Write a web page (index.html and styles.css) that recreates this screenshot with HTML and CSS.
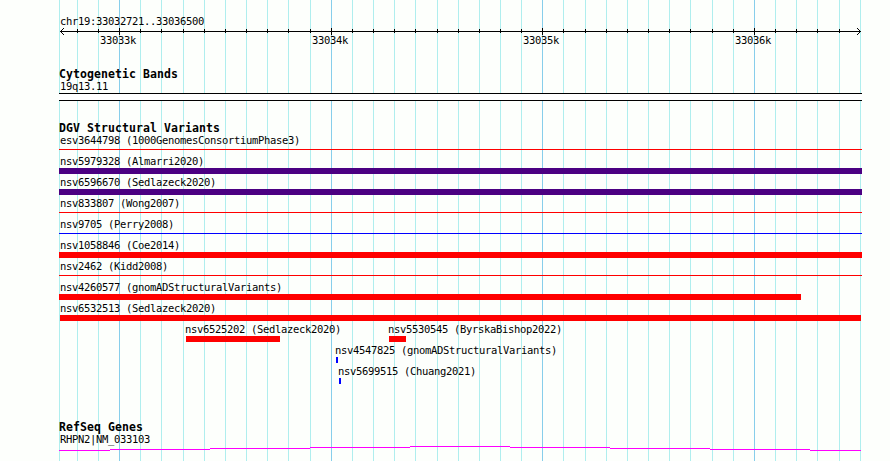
FILE: index.html
```html
<!DOCTYPE html>
<html lang="en">
<head>
  <meta charset="UTF-8" />
  <title>chr19:33032721..33036500</title>
  <link rel="stylesheet" href="styles.css">
</head>
<body>

<main class="panel">
  <!-- grid lines, one every 100 bp -->
  <svg class="grid" width="803" height="461" shape-rendering="crispEdges">
    <path class="minor" d="M.5 0v461M18.5 0v461M39.5 0v461M81.5 0v461M102.5 0v461M124.5 0v461M145.5 0v461M166.5 0v461M187.5 0v461M208.5 0v461M229.5 0v461M251.5 0v461M293.5 0v461M314.5 0v461M335.5 0v461M356.5 0v461M378.5 0v461M399.5 0v461M420.5 0v461M441.5 0v461M462.5 0v461M504.5 0v461M526.5 0v461M547.5 0v461M568.5 0v461M589.5 0v461M610.5 0v461M631.5 0v461M653.5 0v461M674.5 0v461M716.5 0v461M737.5 0v461M758.5 0v461M780.5 0v461M801.5 0v461" />
    <path class="major" d="M60.5 0v461M272.5 0v461M483.5 0v461M695.5 0v461" />
  </svg>

  <section class="ruler">
    <div class="label">chr19:33032721..33036500</div>
    <svg class="scale" width="803" height="7" shape-rendering="crispEdges">
      <path d="M1 3.5h801" />
      <path d="M18.5 1v4M39.5 1v4M81.5 1v4M102.5 1v4M124.5 1v4M145.5 1v4M166.5 1v4M187.5 1v4M208.5 1v4M229.5 1v4M251.5 1v4M293.5 1v4M314.5 1v4M335.5 1v4M356.5 1v4M378.5 1v4M399.5 1v4M420.5 1v4M441.5 1v4M462.5 1v4M504.5 1v4M526.5 1v4M547.5 1v4M568.5 1v4M589.5 1v4M610.5 1v4M631.5 1v4M653.5 1v4M674.5 1v4M716.5 1v4M737.5 1v4M758.5 1v4M780.5 1v4" />
      <path d="M60.5 0v7M272.5 0v7M483.5 0v7M695.5 0v7" />
      <path d="M4.5 0v1M3.5 1v1M2.5 2v1M2.5 4v1M3.5 5v1M4.5 6v1" />
      <path d="M798.5 0v1M799.5 1v1M800.5 2v1M800.5 4v1M799.5 5v1M798.5 6v1" />
    </svg>
    <div class="numbers">
      <span>33033k</span>
      <span>33034k</span>
      <span>33035k</span>
      <span>33036k</span>
    </div>
  </section>

  <section class="track bands">
    <h2>Cytogenetic Bands</h2>
    <div class="label">19q13.11</div>
    <div class="band"></div>
  </section>

  <section class="track variants">
    <h2>DGV Structural Variants</h2>
    <div class="row"><div class="feature full">
      <div class="label">esv3644798 (1000GenomesConsortiumPhase3)</div>
      <div class="line loss"></div>
    </div></div>
    <div class="row"><div class="feature full">
      <div class="label">nsv5979328 (Almarri2020)</div>
      <div class="bar complex"></div>
    </div></div>
    <div class="row"><div class="feature full">
      <div class="label">nsv6596670 (Sedlazeck2020)</div>
      <div class="bar complex"></div>
    </div></div>
    <div class="row"><div class="feature full">
      <div class="label">nsv833807 (Wong2007)</div>
      <div class="line loss"></div>
    </div></div>
    <div class="row"><div class="feature full">
      <div class="label">nsv9705 (Perry2008)</div>
      <div class="line gain"></div>
    </div></div>
    <div class="row"><div class="feature full">
      <div class="label">nsv1058846 (Coe2014)</div>
      <div class="bar loss"></div>
    </div></div>
    <div class="row"><div class="feature full">
      <div class="label">nsv2462 (Kidd2008)</div>
      <div class="line loss"></div>
    </div></div>
    <div class="row"><div class="feature full">
      <div class="label">nsv4260577 (gnomADStructuralVariants)</div>
      <div class="bar loss" style="width: 742px"></div>
    </div></div>
    <div class="row"><div class="feature full">
      <div class="label">nsv6532513 (Sedlazeck2020)</div>
      <div class="bar loss inset"></div>
    </div></div>
    <div class="row">
      <div class="feature" style="margin-left: 127px; width: 94px">
        <div class="label">nsv6525202 (Sedlazeck2020)</div>
        <div class="bar loss"></div>
      </div>
      <div class="feature" style="margin-left: 109px; width: 17px">
        <div class="label">nsv5530545 (ByrskaBishop2022)</div>
        <div class="bar loss"></div>
      </div>
    </div>
    <div class="row"><div class="feature" style="margin-left: 277px; width: 2px">
      <div class="label">nsv4547825 (gnomADStructuralVariants)</div>
      <div class="bar gain"></div>
    </div></div>
    <div class="row"><div class="feature" style="margin-left: 280px; width: 2px">
      <div class="label">nsv5699515 (Chuang2021)</div>
      <div class="bar gain"></div>
    </div></div>
  </section>

  <section class="track genes">
    <h2>RefSeq Genes</h2>
    <div class="label">RHPN2|NM_033103</div>
    <svg class="intron" width="803" height="5" shape-rendering="crispEdges">
      <path d="M0 4.5h51M51 3.5h100M151 2.5h100M251 1.5h100M351 .5h100M451 1.5h100M551 2.5h100M651 3.5h100M751 4.5h51" />
    </svg>
  </section>
</main>

</body>
</html>
```
FILE: styles.css
```css
body {
  margin: 0;
  background: #fdfffc;
  color: #000;
  font-family: "DejaVu Sans Mono", monospace;
}
.panel {
  position: relative;
  width: 803px;
  height: 461px;
  margin-left: 59px;
  overflow: hidden;
}
svg {
  display: block;
  fill: none;
}
.grid {
  position: absolute;
  top: 0;
  left: 0;
  z-index: -1;
}
.minor {
  stroke: #afeeee;
}
.major {
  stroke: #87ceeb;
}
.label,
.numbers {
  font-size: 10.5px;
  line-height: 12px;
  letter-spacing: -0.32px;
  white-space: nowrap;
}
.label {
  height: 12px;
  margin-left: 1px;
}
h2 {
  height: 12px;
  margin: 0;
  font-size: 11.5px;
  line-height: 13px;
  letter-spacing: 0.08px;
  font-weight: bold;
  white-space: nowrap;
}

/* ruler */
.ruler {
  height: 53px;
  padding-top: 15px;
}
.scale {
  margin-top: 1px;
  stroke: #000;
}
.numbers {
  display: grid;
  grid-template-columns: 212px 211px 212px 100px;
  margin-left: 41px;
  margin-top: -1px;
}

/* tracks */
.track .label {
  height: 13px;
}
.bands {
  height: 54px;
}
.band {
  height: 6px;
  border-top: 1px solid #000;
  border-bottom: 1px solid #000;
  background: #fff;
}
.variants {
  height: 299px;
}
.row {
  display: flex;
  height: 21px;
}
.feature .label {
  margin-left: -1px;
}
.full {
  width: 100%;
}
.full .label {
  margin-left: 1px;
}
.bar {
  height: 6px;
}
.line {
  height: 1px;
  margin-top: 2px;
}
.inset {
  margin: 0 1px;
}
.loss {
  background: #f00;
}
.gain {
  background: #00f;
}
.complex {
  background: #4b0082;
}
.intron {
  stroke: #f0f;
}
```
